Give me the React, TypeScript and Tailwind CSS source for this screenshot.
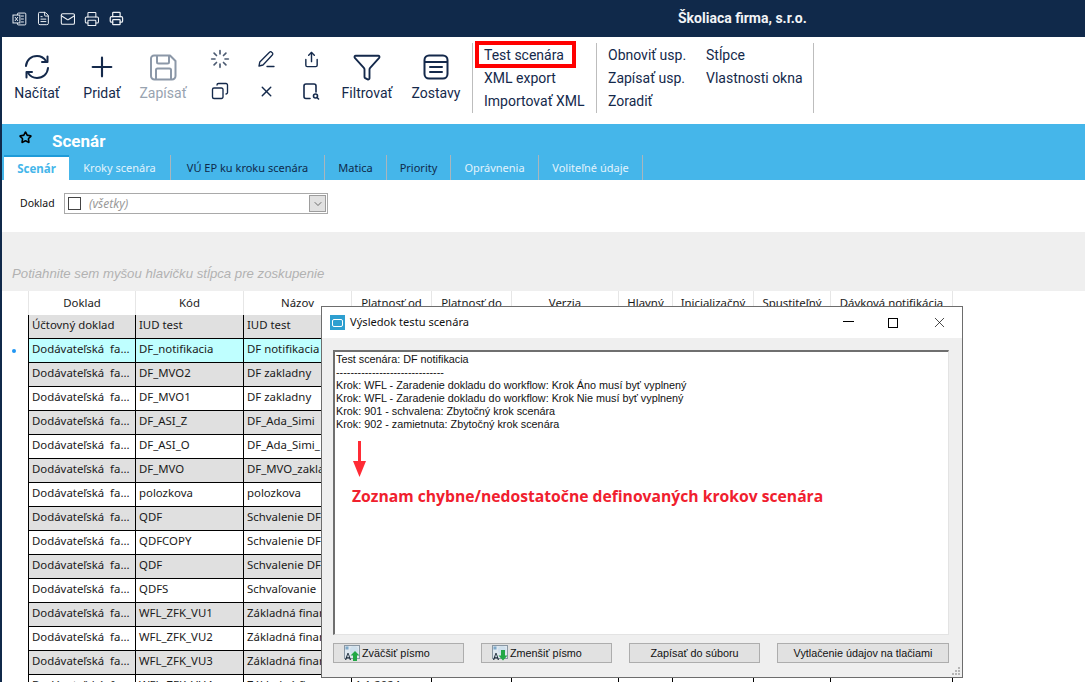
import React from "react";
import { FileText, Mail, Printer, Plus, X, Filter, Loader, Copy, Star, ChevronDown, Share } from "lucide-react";

const NAVY = "#14294b";

function Reload() {
  return (
    <svg width="28" height="28" viewBox="0 0 28 28" fill="none" stroke={NAVY} strokeWidth="2" strokeLinecap="round" strokeLinejoin="round">
      <path d="M3 13C3.5 7 8 3 14 3c4 0 7 2 9 5" />
      <path d="M24.5 3.5V9h-5.5" />
      <path d="M25 15c-.5 6-5 10-11 10-4 0-7-2-9-5" />
      <path d="M3.500 24.500V19h5.500" />
    </svg>
  );
}

function SaveIcon() {
  return (
    <svg width="27" height="27" viewBox="0 0 27 27" fill="none" stroke="#8c98a8" strokeWidth="2" strokeLinejoin="round">
      <path d="M4 1.500h16l5.500 5.500v15a3.500 3.500 0 0 1-3.500 3.500H4.500A3.500 3.500 0 0 1 1 22V4.500A3 3 0 0 1 4 1.500z" />
      <path d="M7 2v6a1.500 1.500 0 0 0 1.500 1.500h9A1.500 1.500 0 0 0 19 8V2" />
      <path d="M6 25.500V16a1.500 1.500 0 0 1 1.500-1.500h12A1.500 1.500 0 0 1 21 16v9.500" />
    </svg>
  );
}

function ReportIcon() {
  return (
    <svg width="26" height="26" viewBox="0 0 26 26" fill="none" stroke={NAVY} strokeWidth="2" strokeLinecap="round">
      <rect x="1.500" y="1.500" width="23" height="23" rx="4.500" />
      <path d="M2 8h22M7 13h12M7 18h12" />
    </svg>
  );
}

function PenLine() {
  return (
    <svg width="18" height="18" viewBox="0 0 18 18" fill="none" stroke={NAVY} strokeWidth="1.300" strokeLinecap="round" strokeLinejoin="round">
      <path d="M2 16l.8-4L12.500 2.200a1.500 1.500 0 0 1 2.200 0l.6.6a1.500 1.500 0 0 1 0 2.200L6 15z" />
      <path d="M10 16.500h7" />
    </svg>
  );
}

function FileSearch() {
  return (
    <svg width="17" height="17" viewBox="0 0 17 17" fill="none" stroke={NAVY} strokeWidth="1.600" strokeLinecap="round" strokeLinejoin="round">
      <path d="M7 15.500H3a2 2 0 0 1-2-2V3a2 2 0 0 1 2-2h8a2 2 0 0 1 2 2v6" />
      <circle cx="12.500" cy="13" r="2" />
      <path d="M14 14.500l1.500 1.500" />
    </svg>
  );
}

function ExcelIcon() {
  return (
    <svg width="15" height="14" viewBox="0 0 15 14" fill="none" stroke="#e8ecf2" strokeWidth="1">
      <rect x="5.500" y="1" width="8.500" height="12" rx="1" />
      <path d="M9 4h3M9 7h3M9 10h3" />
      <rect x="1" y="3" width="7" height="8" fill="#10294a" />
      <path d="M3 5l3 4M6 5l-3 4" />
    </svg>
  );
}

function ToolButton({ icon, label, muted, w }: { icon: React.ReactNode; label: string; muted?: boolean; w: string }) {
  return (
    <div className={`flex flex-col items-center ${w}`}>
      <div className="flex h-[32px] items-center justify-center">{icon}</div>
      <span className={`text-[14px] leading-[20px] ${muted ? "text-[#98a3b0]" : "text-[#14294b]"}`}>{label}</span>
    </div>
  );
}

function Sep() {
  return <div className="h-[70px] w-px bg-[#bdbdbd]" />;
}

function MenuText({ children }: { children: React.ReactNode }) {
  return <span className="block h-[23px] whitespace-nowrap text-[14px] leading-[23px] text-[#14294b]">{children}</span>;
}

const tabs = [
  { t: "Kroky scenára", w: "w-[102px]", c: "text-[#e2f3fc]" },
  { t: "VÚ EP ku kroku scenára", w: "w-[154px]", c: "text-[#0f2a4a]" },
  { t: "Matica", w: "w-[62px]", c: "text-[#0f2a4a]" },
  { t: "Priority", w: "w-[64px]", c: "text-[#0f2a4a]" },
  { t: "Oprávnenia", w: "w-[88px]", c: "text-[#e2f3fc]" },
  { t: "Voliteľné údaje", w: "w-[104px]", c: "text-[#e2f3fc]" },
];

const headers = [
  { t: "Doklad", w: "w-[107px]" },
  { t: "Kód", w: "w-[108px]" },
  { t: "Názov", w: "w-[108px]" },
  { t: "Platnosť od", w: "w-[80px]" },
  { t: "Platnosť do", w: "w-[80px]" },
  { t: "Verzia", w: "w-[107px]" },
  { t: "Hlavný", w: "w-[54px]" },
  { t: "Inicializačný", w: "w-[81px]" },
  { t: "Spustiteľný", w: "w-[77px]" },
  { t: "Dávková notifikácia", w: "w-[122px]" },
];

const DF = "Dodávateľská  fa...";
const rows: [string, string, string][] = [
  ["Účtovný doklad", "IUD test", "IUD test"],
  [DF, "DF_notifikacia", "DF notifikacia"],
  [DF, "DF_MVO2", "DF zakladny"],
  [DF, "DF_MVO1", "DF zakladny"],
  [DF, "DF_ASI_Z", "DF_Ada_Simi"],
  [DF, "DF_ASI_O", "DF_Ada_Simi_"],
  [DF, "DF_MVO", "DF_MVO_zakla"],
  [DF, "polozkova", "polozkova"],
  [DF, "QDF", "Schvalenie DF"],
  [DF, "QDFCOPY", "Schvalenie DF"],
  [DF, "QDF", "Schvalenie DF"],
  [DF, "QDFS", "Schvaľovanie"],
  [DF, "WFL_ZFK_VU1", "Základná finan"],
  [DF, "WFL_ZFK_VU2", "Základná finan"],
  [DF, "WFL_ZFK_VU3", "Základná finan"],
  [DF, "WFL_ZFK_VU4", "Základná finan"],
];

function Cell({ w, children, center }: { w: string; children?: React.ReactNode; center?: boolean }) {
  return (
    <div className={`${w} flex h-full shrink-0 items-center overflow-hidden border-r border-black px-[3px] pb-[4px] whitespace-pre ${center ? "justify-center" : ""}`}>
      {children}
    </div>
  );
}

function Box() {
  return <div className="mt-[16px] h-[12px] w-[12px] shrink-0 border border-[#333] bg-white" />;
}

function AIcon({ up }: { up?: boolean }) {
  return (
    <svg width="16" height="16" viewBox="0 0 16 16">
      <rect x="0.500" y="0.500" width="15" height="13" fill="#dfe8f0" stroke="#8a97a3" />
      <rect x="1.500" y="1.500" width="3" height="3" fill="#7fa9c9" />
      <circle cx="10" cy="5" r="4" fill="#cfe0ec" />
      <path d="M1 15l2.500-7h1L7 15H5.800l-.5-1.700H2.800L2.200 15zM3.100 12.300h2L4 9z" fill="#1c2a38" />
      {up ? (
        <path d="M11 6l4.500 4.500H13V16H9v-5.500H6.500z" fill="#22a846" />
      ) : (
        <path d="M9 5h4v5.500h2.500L11 15.500l-4.500-5H9z" fill="#22a846" />
      )}
    </svg>
  );
}

function Btn({ w, children, icon }: { w: string; children: string; icon?: React.ReactNode }) {
  return (
    <div className={`${w} flex h-[20px] shrink-0 items-center ${icon ? "pl-[10px]" : "justify-center"} gap-[2px] border border-[#adadad] bg-[#e1e1e1] text-[10.8px] text-[#111]`}>
      {icon}
      <span className="whitespace-pre">{children}</span>
    </div>
  );
}

export default function App() {
  return (
    <div className="relative h-[682px] w-[1085px] overflow-hidden border-l-2 border-[#10294a] bg-white font-['Roboto',sans-serif]">
      {/* top bar */}
      <div className="-ml-[2px] flex h-[37px] w-[1085px] items-center bg-[#10294a] pl-[12px] text-[#eef1f5]">
        <div className="flex w-[112px] items-center gap-[9px]">
          <ExcelIcon />
          <FileText size={15} strokeWidth={1.6} />
          <Mail size={16} strokeWidth={1.6} />
          <Printer size={16} strokeWidth={1.6} />
          <Printer size={15} strokeWidth={2} />
        </div>
        <div className="ml-[554px] text-[14px] font-bold text-[#f2f4f7]">Školiaca firma, s.r.o.</div>
      </div>

      {/* toolbar */}
      <div className="flex h-[87px] items-start pt-[6px]">
        <div className="flex h-[70px] items-start pt-[8px]">
          <ToolButton w="w-[70px]" icon={<Reload />} label="Načítať" />
          <ToolButton w="w-[60px]" icon={<Plus size={32} strokeWidth={1.6} color={NAVY} />} label="Pridať" />
          <ToolButton w="w-[62px]" icon={<SaveIcon />} label="Zapísať" muted />
          <div className="-mt-[8px] ml-[3px] grid grid-cols-[46px_46px_45px] grid-rows-[32px_32px] justify-items-center">
            <div className="flex items-center"><Loader size={20} color="#4c5b72" strokeWidth={2} /></div>
            <div className="flex items-center"><PenLine /></div>
            <div className="flex items-center"><Share size={17} color={NAVY} strokeWidth={2} /></div>
            <div className="flex items-center"><Copy size={18} color={NAVY} strokeWidth={1.8} className="-scale-x-100" /></div>
            <div className="flex items-center"><X size={17} color={NAVY} strokeWidth={2} /></div>
            <div className="flex items-center"><FileSearch /></div>
          </div>
          <ToolButton w="w-[66px]" icon={<Filter size={30} color={NAVY} strokeWidth={1.5} />} label="Filtrovať" />
          <ToolButton w="w-[72px]" icon={<ReportIcon />} label="Zostavy" />
        </div>
        <Sep />
        <div className="relative w-[123px] pl-[11px]">
          <div className="pt-[1px]">
            <MenuText>Test scenára</MenuText>
            <MenuText>XML export</MenuText>
            <MenuText>Importovať XML</MenuText>
          </div>
          <div className="absolute -top-[2px] left-[2px] h-[27px] w-[101px] border-4 border-[#ff0000]" />
        </div>
        <Sep />
        <div className="w-[109px] pl-[11px] pt-[1px]">
          <MenuText>Obnoviť usp.</MenuText>
          <MenuText>Zapísať usp.</MenuText>
          <MenuText>Zoradiť</MenuText>
        </div>
        <div className="w-[107px] pt-[1px]">
          <MenuText>Stĺpce</MenuText>
          <MenuText>Vlastnosti okna</MenuText>
        </div>
        <Sep />
      </div>

      {/* blue header */}
      <div className="h-[56px] bg-[#45b6ea]">
        <div className="flex h-[31px] items-center">
          <Star size={13} color="#000" strokeWidth={3} className="-mt-[4px] ml-[17px]" />
          <span className="ml-[20px] mt-[5px] text-[17px] font-bold text-white">Scenár</span>
        </div>
        <div className="flex h-[25px] pl-[2px] font-['Noto_Sans',sans-serif] text-[11px]">
          <div className="flex w-[65px] items-center justify-center border-t-2 border-[#1f9bd8] bg-white text-[11.5px] font-bold text-[#45b6ea]">Scenár</div>
          {tabs.map((t) => (
            <div key={t.t} className={`${t.w} flex items-center justify-center border-r border-[#a9b6bd] pt-[2px] whitespace-nowrap ${t.c}`}>
              {t.t}
            </div>
          ))}
        </div>
      </div>

      {/* filter */}
      <div className="flex h-[52px] items-start pt-[13px] font-['Noto_Sans',sans-serif] text-[10.5px] text-[#111]">
        <span className="ml-[18px] w-[44px] leading-[21px]">Doklad</span>
        <div className="flex h-[21px] w-[264px] items-center border border-[#a9a9a9] bg-white pl-[3px] pr-[1px]">
          <div className="h-[13px] w-[13px] border border-[#444]" />
          <span className="ml-[8px] flex-1 text-[12px] italic text-[#9a9a9a]">(všetky)</span>
          <div className="flex h-[17px] w-[17px] items-center justify-center border border-[#9d9d9d] bg-[#e1e1e1]">
            <ChevronDown size={12} color="#444" strokeWidth={1.5} />
          </div>
        </div>
      </div>

      {/* group band */}
      <div className="flex h-[59px] items-end bg-[#efefef] pb-[7px] pl-[10px] font-['Liberation_Sans',sans-serif] text-[13.2px] italic text-[#b2b2b2]">
        Potiahnite sem myšou hlavičku stĺpca pre zoskupenie
      </div>

      {/* grid */}
      <div className="font-['Noto_Sans',sans-serif] text-[11.4px] text-[#1a1a1a]">
        <div className="flex h-[24px]">
          <div className="w-[27px] shrink-0 border-r border-[#e6e6e6]" />
          {headers.map((h) => (
            <div key={h.t} className={`${h.w} flex shrink-0 items-center justify-center border-r border-[#e6e6e6] whitespace-nowrap`}>
              {h.t}
            </div>
          ))}
        </div>
        {rows.map((r, i) => (
          <div key={i} className="flex h-[24px]">
            <div className="flex w-[27px] shrink-0 items-center justify-center border-r border-black">
              {i === 1 && <div className="-ml-[3px] h-[4px] w-[4px] rounded-full bg-[#2196f3]" />}
            </div>
            <div className={`flex border-b border-black ${i === 1 ? "bg-[#bfffff]" : i % 2 === 0 ? "bg-[#e0e0e0]" : "bg-white"}`}>
              <Cell w="w-[107px]">{r[0]}</Cell>
              <Cell w="w-[108px]">{r[1]}</Cell>
              <Cell w="w-[108px]">{r[2]}</Cell>
              <Cell w="w-[80px]">{i === 15 ? "1.1.2024" : ""}</Cell>
              <Cell w="w-[80px]" />
              <Cell w="w-[107px]" />
              <Cell w="w-[54px]" center>{i === 15 && <Box />}</Cell>
              <Cell w="w-[81px]" center>{i === 15 && <Box />}</Cell>
              <Cell w="w-[77px]" center>{i === 15 && <Box />}</Cell>
              <Cell w="w-[122px]" center>{i === 15 && <Box />}</Cell>
            </div>
          </div>
        ))}
      </div>

      {/* dialog */}
      <div className="absolute left-[319px] top-[306px] flex h-[372px] w-[642px] flex-col border border-[#6d6d6d] bg-[#efefef] font-['Liberation_Sans',sans-serif] text-[#111]">
        <div className="flex h-[31px] shrink-0 items-center bg-white pl-[8px]">
          <div className="flex h-[15px] w-[15px] items-center justify-center bg-[#2e9fd0]">
            <div className="h-[8px] w-[11px] rounded-[2px] border border-white" />
          </div>
          <span className="ml-[5px] font-['Noto_Sans',sans-serif] text-[11.1px]">Výsledok testu scenára</span>
          <div className="ml-auto flex items-center">
            <div className="-mt-[2px] h-px w-[11px] bg-black" />
            <div className="ml-[34px] h-[10px] w-[10px] border border-black" />
            <X size={17} strokeWidth={1} color="#000" className="ml-[33px] mr-[14px]" />
          </div>
        </div>
        <div className="ml-[11px] mt-[12px] h-[285px] w-[616px] shrink-0 border-t-2 border-l-2 border-[#6f6f6f] border-r border-b border-r-[#e3e3e3] border-b-[#e3e3e3] bg-white pl-[1px] pt-[1px] text-[10.8px] leading-[13px]">
          <div>Test scenára: DF notifikacia</div>
          <div className="h-[13px] overflow-hidden">------------------------------</div>
          <div>Krok: WFL - Zaradenie dokladu do workflow: Krok Áno musí byť vyplnený</div>
          <div>Krok: WFL - Zaradenie dokladu do workflow: Krok Nie musí byť vyplnený</div>
          <div>Krok: 901 - schvalena: Zbytočný krok scenára</div>
          <div>Krok: 902 - zamietnuta: Zbytočný krok scenára</div>
          <svg width="14" height="42" viewBox="0 0 14 42" className="ml-[16px] mt-[9px] block">
            <path d="M6 1h3v20h5L7.500 37 1 21h5z" fill="#ff2b35" />
          </svg>
          <div className="ml-[16px] mt-[4px] font-['Open_Sans',sans-serif] text-[15.7px] leading-[20px] font-bold text-[#f0202e]">
            Zoznam chybne/nedostatočne definovaných krokov scenára
          </div>
        </div>
        <div className="ml-[11px] mt-[8px] flex gap-[17px]">
          <Btn w="w-[131px]" icon={<AIcon up />}>Zväčšiť písmo</Btn>
          <Btn w="w-[131px]" icon={<AIcon />}>Zmenšiť písmo</Btn>
          <Btn w="w-[131px]">Zapísať do súboru</Btn>
          <Btn w="w-[172px]">Vytlačenie údajov na tlačiami</Btn>
        </div>
        <svg width="10" height="10" viewBox="0 0 10 10" fill="#b5b5b5" className="absolute bottom-[1px] right-[1px]">
          <rect x="7" y="1" width="2" height="2" />
          <rect x="4" y="4" width="2" height="2" />
          <rect x="7" y="4" width="2" height="2" />
          <rect x="1" y="7" width="2" height="2" />
          <rect x="4" y="7" width="2" height="2" />
          <rect x="7" y="7" width="2" height="2" />
        </svg>
      </div>
    </div>
  );
}
